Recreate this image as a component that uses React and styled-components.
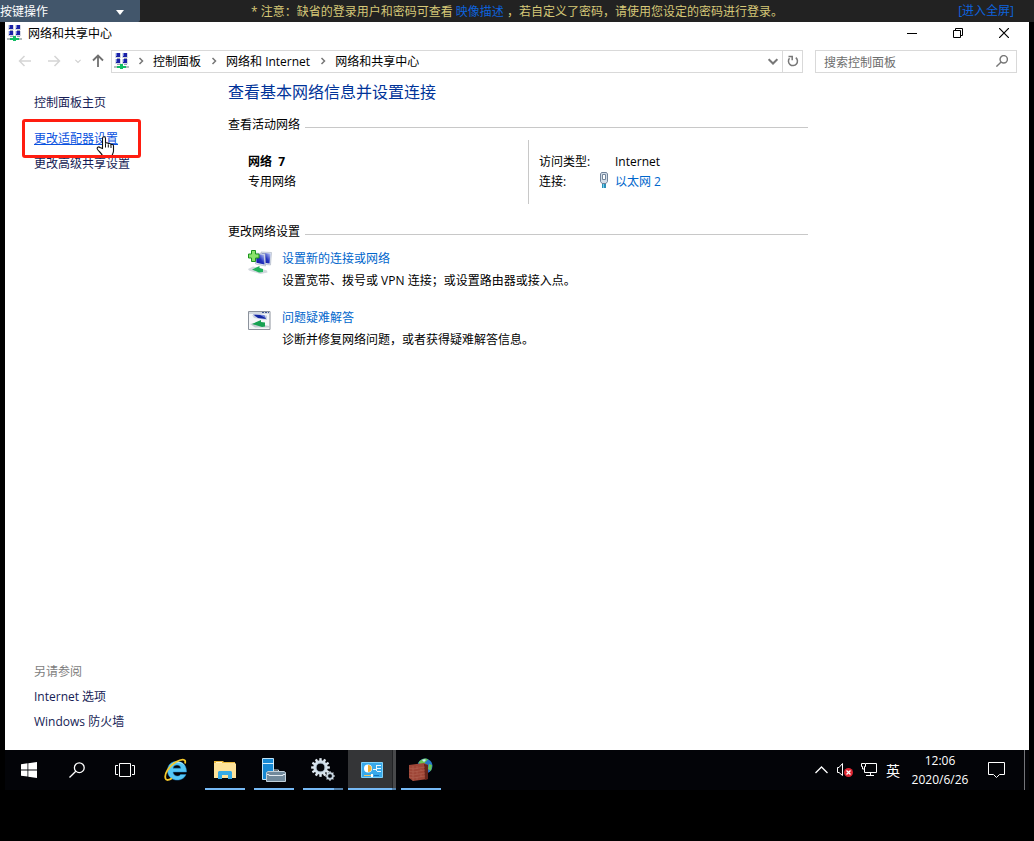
import React from 'react';
import styled, { createGlobalStyle } from 'styled-components';

const GlobalStyle = createGlobalStyle`
  *, *::before, *::after { box-sizing: border-box; }
  body {
    margin: 0;
    background: #000;
    color: #000;
    font: 12px/20px "Open Sans", "Noto Sans CJK SC", sans-serif;
  }
  button, input { font: inherit; color: inherit; }
  p, h1, h2, dl, dd { margin: 0; font-weight: 400; }
  svg { display: block; flex: none; }
`;

const Page = styled.div`
  display: flex;
  flex-direction: column;
  min-height: 100vh;
  padding-bottom: 51px;
`;

const PlainButton = styled.button`
  display: flex;
  align-items: center;
  justify-content: center;
  padding: 0;
  border: 0;
  background: none;
  cursor: pointer;
`;

const ConsoleBar = styled.header`
  display: flex;
  align-items: center;
  height: 22px;
  background: #222;
  white-space: nowrap;
`;

const KeyMenu = styled(PlainButton)`
  justify-content: space-between;
  width: 140px;
  height: 22px;
  padding-top: 2px;
  padding-right: 16px;
  border-radius: 0 0 2px 0;
  background: #42566b;
  color: #fff;
`;

const Notice = styled.p`
  flex: 1;
  padding-top: 2px;
  padding-left: 111px;
  color: #d6c878;
`;

const ConsoleLink = styled.a`
  color: #0e62dc;
  text-decoration: none;
`;

const FullScreen = styled(ConsoleLink)`
  margin-right: 20px;
`;

const Window = styled.div`
  display: flex;
  flex: 1;
  flex-direction: column;
  margin: 0 5px;
  background: #fff;
`;

const TitleBar = styled.div`
  display: flex;
  align-items: center;
  gap: 6px;
  height: 22px;
  padding: 0 2px;
`;

const Title = styled.div`
  flex: 1;
  padding-top: 2px;
`;

const CaptionButtons = styled.div`
  display: flex;
`;

const CaptionButton = styled(PlainButton)`
  width: 46px;
  height: 22px;
`;

const NavRow = styled.nav`
  display: flex;
  align-items: center;
  height: 34px;
  padding: 0 12px 0 6px;
`;

const NavButton = styled(PlainButton)`
  width: ${(p) => p.$width}px;
  height: 22px;
`;

const AddressBar = styled.div`
  display: flex;
  flex: 1;
  align-items: center;
  height: 23px;
  padding-left: 2px;
  border: 1px solid #d9d9d9;
`;

const Crumb = styled.a`
  padding-top: 1px;
  padding-right: 1px;
  color: #000;
  text-decoration: none;
  white-space: nowrap;
`;

const CrumbArrow = styled.span`
  display: flex;
  justify-content: center;
  width: 24px;
`;

const Spacer = styled.div`
  flex: 1;
`;

const RefreshButton = styled(NavButton)`
  border-left: 1px solid #d9d9d9;
`;

const SearchBox = styled.label`
  display: flex;
  align-items: center;
  width: 202px;
  height: 23px;
  margin-left: 12px;
  padding: 0 8px;
  border: 1px solid #d9d9d9;
`;

const SearchInput = styled.input`
  flex: 1;
  min-width: 0;
  height: 21px;
  padding: 2px 0 0;
  border: 0;
  outline: 0;
  background: none;
  &::placeholder { color: #6d6d6d; opacity: 1; }
`;

const Body = styled.div`
  display: flex;
  flex: 1;
`;

const Sidebar = styled.aside`
  display: flex;
  flex-direction: column;
  justify-content: space-between;
  width: 223px;
  padding: 15px 0 18px 29px;
`;

const SideLinks = styled.div`
  display: flex;
  flex-direction: column;
  align-items: flex-start;
  gap: 5px;
`;

const SideLink = styled.a`
  color: #151c55;
  text-decoration: none;
`;

const HomeLink = styled(SideLink)`
  margin-bottom: 11px;
`;

const ActiveItem = styled.div`
  position: relative;
`;

const ActiveLink = styled(SideLink)`
  color: #0a52e0;
  text-decoration: underline;
`;

const Highlight = styled.div`
  position: absolute;
  inset: -10px -23px -9px -12px;
  border: 3px solid #ff1d10;
  border-radius: 3px;
  pointer-events: none;
`;

const Pointer = styled.svg`
  position: absolute;
  top: 6px;
  left: 58px;
`;

const SeeAlso = styled.p`
  color: #7d7d7d;
`;

const Main = styled.main`
  flex: 0 1 580px;
`;

const Heading = styled.h1`
  color: #003399;
  font-size: 16px;
  line-height: 28px;
`;

const SectionTitle = styled.h2`
  display: flex;
  align-items: center;
  gap: 5px;
  margin-top: ${(p) => p.$top}px;
  font-size: 12px;
  &::after {
    content: "";
    flex: 1;
    height: 1px;
    margin-top: 4px;
    background: #c8c8c8;
  }
`;

const Network = styled.div`
  display: flex;
  margin-top: 5px;
  padding-left: 20px;
`;

const NetworkName = styled.div`
  width: 280px;
  padding-top: 12px;
`;

const Strong = styled.p`
  font-weight: 700;
  white-space: pre;
`;

const Details = styled.dl`
  display: grid;
  grid-template-columns: 58px 18px auto;
  align-content: start;
  height: 64px;
  padding: 12px 0 0 10px;
  border-left: 1px solid #c8c8c8;
`;

const DetailValue = styled.dd`
  grid-column: 3;
`;

const DetailIcon = styled.dd`
  padding-left: 3px;
`;

const TaskLink = styled.a`
  color: #0066cc;
  text-decoration: none;
`;

const Task = styled.section`
  display: flex;
  gap: 10px;
  margin-top: ${(p) => p.$top}px;
  padding-left: 20px;
`;

const TaskIcon = styled.div`
  display: flex;
  align-items: center;
  height: 26px;
`;

const TaskText = styled.div`
  display: flex;
  flex-direction: column;
  align-items: flex-start;
  gap: 2px;
`;

const Taskbar = styled.footer`
  display: flex;
  height: 40px;
  margin: 0 5px;
  background: #030408;
  color: #fff;
`;

const SystemButtons = styled.div`
  display: flex;
  margin-right: 3px;
`;

const Apps = styled.div`
  display: flex;
  flex: 1;
  gap: 1px;
`;

const TaskButton = styled(PlainButton)`
  position: relative;
  width: 48px;
  height: 40px;
  background: ${(p) => (p.$active ? 'linear-gradient(90deg, #343537 44px, #222325 44px, #222325 45px, #48494b 45px)' : 'none')};
  &::after {
    content: "";
    position: absolute;
    right: ${(p) => (p.$active ? 0 : 4)}px;
    bottom: 0;
    left: ${(p) => (p.$active ? 0 : 4)}px;
    height: 2px;
    background: ${(p) => {
      if (!p.$open) return 'none';
      const split = p.$active ? 44 : 31;
      return p.$stacked ? `linear-gradient(90deg, #76b9f5 ${split}px, #537fa8 ${split}px)` : '#76b9f5';
    }};
  }
`;

const Tray = styled.div`
  display: flex;
  align-items: center;
`;

const TrayButton = styled(PlainButton)`
  width: 24px;
  height: 40px;
`;

const InputMethod = styled(TrayButton)`
  padding-top: 2px;
  font-size: 14px;
`;

const Clock = styled(PlainButton)`
  flex-direction: column;
  width: 70px;
  line-height: 19px;
`;

const Notifications = styled(TrayButton)`
  width: 50px;
  margin-right: 4px;
  padding-right: 7px;
  border-right: 1px solid #74757a;
`;

const NetworkIcon = () => (
  <svg width="15" height="16" viewBox="0 0 15 16" aria-hidden="true">
    {[[1, 0], [8, 0], [1, 6], [8, 6]].map(([x, y]) => (
      <g key={`${x}-${y}`} transform={`translate(${x} ${y})`}>
        <path fill="#d5d9e3" d="M0 0h6v5H0z" />
        <path fill="#1a20a6" d="M1 0h4v4H1z" />
        <path fill="#7285e0" d="M1 0h1v3H1z" />
        <path fill="#98a1b4" d="M2 5h3v1H2z" />
      </g>
    ))}
    <path fill="#b3bcbe" d="M0 13h15v2H0z" />
    <path fill="#11bd63" d="M6 11h3v2h3v2H9v1H6v-1H3v-2h3z" />
  </svg>
);

const Chevron = ({ color = '#777', d, size = 8, width = 1.5 }) => (
  <svg width={size} height={size} viewBox="0 0 8 8" fill="none" stroke={color} strokeWidth={width} aria-hidden="true">
    <path d={d} />
  </svg>
);
const right = 'M2.5 1 5.5 4 2.5 7';
const down = 'M0.5 2.5 4 6 7.5 2.5';

const Arrow = ({ color, turn = 0, width = 1.5 }) => (
  <svg width="14" height="14" viewBox="0 0 14 14" fill="none" stroke={color} strokeWidth={width} aria-hidden="true">
    <path transform={`rotate(${turn} 7 7)`} d="M13 7H1.5M6.5 2l-5 5 5 5" />
  </svg>
);

const Magnifier = ({ size, color, width }) => (
  <svg width={size} height={size} viewBox="0 0 16 16" fill="none" stroke={color} strokeWidth={width} aria-hidden="true">
    <circle cx="10.3" cy="5.7" r="4.9" />
    <path d="M6.8 9.2.5 15.5" />
  </svg>
);

const Hand = () => (
  <Pointer width="24" height="24" viewBox="0 0 24 24" aria-hidden="true">
    <path
      fill="#fff"
      stroke="#111"
      strokeWidth="1.1"
      d="M10.5 13.500V3.500c0-2.300 3-2.300 3 0V8.500c.3-1.200 2.700-1 2.800.5.4-1 2.600-.8 2.700.8.6-.8 2.500-.3 2.500 1.200V16c0 2-1.200 3-1.500 5h-9.500C10 18.500 7.500 17 5.500 14.500c-1.200-2 1-3.500 2.500-2z"
    />
    <path fill="none" stroke="#111" d="M13.5 8.500v4M16.300 9.500v3M19 10.500v2.500" />
  </Pointer>
);

const EthernetIcon = () => (
  <svg width="8" height="16" viewBox="0 0 8 16" aria-hidden="true">
    <path fill="#d3dde8" stroke="#71839a" d="M1.5.5h5l1 1.500v7.500L6 11.500H2L.5 9.500V2z" />
    <path fill="#fff" stroke="#73869b" d="M2.500 2.500h3v5h-3z" />
    <path fill="#2b8fb9" d="M2 12h4v4H2z" />
    <path fill="#77cde9" d="M3 12h1v4H3z" />
  </svg>
);

const NewConnectionIcon = () => (
  <svg width="24" height="24" viewBox="0 0 24 24" aria-hidden="true">
    <defs>
      <linearGradient id="screen" x1="0" y1="1" x2="1" y2="0">
        <stop offset="0" stopColor="#0c129e" />
        <stop offset=".5" stopColor="#2433bd" />
        <stop offset="1" stopColor="#c5d3fb" />
      </linearGradient>
    </defs>
    <path fill="#dfe4ee" stroke="#a5aebf" strokeWidth=".6" d="m13 2 10.500.500-1 12.500-9-1z" />
    <path fill="url(#screen)" d="m14 3 8.500.500-1 10-7-1z" />
    <path fill="#dfe4ee" stroke="#a5aebf" strokeWidth=".6" d="m7 3 10 .800.500 12.200-10-2z" />
    <path fill="url(#screen)" d="m8 4 8 .800.500 9.700-8-1.800z" />
    <path fill="#d3d8de" d="m0 19 5-2.500 14 4 .5 2-7 1.500L1 20.500z" />
    <path fill="#1eb35a" d="m4 19.500 7.500-3.500v2l3.500 1v3l-4 .500z" />
    <path fill="#8be36a" stroke="#1c9420" d="M3.500.500h4v3.500h3.500v4H7.500v3.500h-4V8H.5V4h3z" />
  </svg>
);

const TroubleshootIcon = () => (
  <svg width="24" height="20" viewBox="0 0 24 20" aria-hidden="true">
    <path fill="#f4f6f8" stroke="#8c929c" d="M.5.500h21.500v18H.5z" />
    <path fill="#d3d9e0" d="M1 1h20.500v2H1z" />
    <path fill="#3c5494" d="M14 1h2v1h-2zM17 1h2v1h-2zM20 1h1v1h-1z" />
    <path fill="#c7d0e0" d="m4 4 15 .500V9L6 7z" />
    <path fill="#1426a3" d="m5 3.500 11 .500 2 4-8-1z" />
    <path fill="#7389de" d="m12 4 4 0 1.500 3z" />
    <path fill="#c4ccd3" d="m2 13 4-1 15 3v1.500H7z" />
    <path fill="#15a152" d="m4 13 9-4v2l4 .500v4l-3 .500z" />
  </svg>
);

const WindowsLogo = () => (
  <svg width="16" height="16" viewBox="0 0 16 16" fill="#fff" aria-hidden="true">
    <path d="m0 2.200 6.500-.9v6.200H0zM7.300 1.200 16 0v7.500H7.300zM0 8.400h6.500v6.200L0 13.700zM7.300 8.400H16V16l-8.700-1.200z" />
  </svg>
);

const TaskViewIcon = () => (
  <svg width="20" height="14" viewBox="0 0 20 14" fill="none" stroke="#fff" aria-hidden="true">
    <path d="M4.5.500h11v13h-11zM3 2.500H.5v9H3M17 2.500h2.500v9H17" />
  </svg>
);

const ExplorerBrowserIcon = () => (
  <svg width="24" height="24" viewBox="0 0 24 24" fill="none" aria-hidden="true">
    <path
      fill="#55c7f5"
      stroke="#2087cc"
      strokeWidth=".5"
      d="M22.5 14H9c.3 4.800 6 5 7.500 2.500h5.500c-3.500 8.800-18.500 7-18.500-4 0-12.500 19.500-12.500 19 1.500zM9 10.200h7.800c-.4-4.200-7.100-4.200-7.800 0z"
    />
    <path fill="#b5eaff" d="M7 7c3-4.500 11-4.500 14 1-4-4-10-4-14-1z" />
    <path stroke="#f4c72b" strokeWidth="1.800" d="M21 5.500c1.500-5.500-4-4.500-9-1.500C5 8 0 16 1.500 20.500c.8 2.500 4 1.500 6.500-.2" />
  </svg>
);

const FolderIcon = () => (
  <svg width="22" height="18" viewBox="0 0 22 18" aria-hidden="true">
    <path fill="#e9b83c" d="M0 0h9l1 1h11v3H0z" />
    <path fill="#fde299" d="M0 2h21l1 1v14H0z" />
    <path fill="#fff3c9" d="M2 1h6v1H2z" />
    <path fill="#35aae6" d="M4 18v-7l1-1h12l1 1v7h-4v-4H8v4z" />
  </svg>
);

const ServerIcon = () => (
  <svg width="24" height="24" viewBox="0 0 24 24" aria-hidden="true">
    <path fill="#1688d2" stroke="#bfe3f7" d="M.5.500h11v21H.5z" />
    <path fill="#d7effc" d="M1 5h11v1H1z" />
    <path fill="none" stroke="#d5dfe6" d="M11.5 14v-2h5v2" />
    <path fill="#71899b" stroke="#c1d0da" d="M4.5 14.500 6 13.500h16l1.500 1v9h-19z" />
    <path fill="none" stroke="#e2eaf0" d="M5 16.500h2v1h14v-1h2" />
  </svg>
);

const Gear = ({ cx, cy, r, teeth }) => (
  <g transform={`translate(${cx} ${cy})`}>
    {Array.from({ length: teeth }, (_, i) => (
      <rect key={i} x={-r * 0.16} y={-r * 1.28} width={r * 0.32} height={r * 0.5} fill="#e1eaf1" transform={`rotate(${(i * 360) / teeth})`} />
    ))}
    <circle r={r * 0.77} fill="none" stroke="#d3e0ea" strokeWidth={r * 0.44} />
    <circle r={r * 0.6} fill="none" stroke="#8397a8" strokeWidth=".5" />
  </g>
);

const GearsIcon = () => (
  <svg width="24" height="24" viewBox="0 0 24 24" aria-hidden="true">
    <Gear cx={9.5} cy={9.5} r={7.3} teeth={12} />
    <Gear cx={19} cy={18} r={3.8} teeth={8} />
  </svg>
);

const ControlPanelIcon = () => (
  <svg width="22" height="16" viewBox="0 0 22 16" aria-hidden="true">
    <path fill="#38a9ea" stroke="#7ed0f8" d="M.5.500h21v15H.5z" />
    <circle cx="7" cy="6.500" r="4" fill="#fff" />
    <path fill="#f6b02c" d="M7 6.500v-3.500a3.500 3.500 0 0 1 3.500 3.500A3.500 3.500 0 0 1 7 10z" />
    <path fill="none" stroke="#e5f7ff" d="M12 7.500h3M15.500 3v6M16 3.500h4M16 6.500h4M16 9.500h4" />
    <path stroke="#eec766" d="M3 13.500h9" />
    <path stroke="#1672b8" d="M13 13.500h5" />
    <path fill="#fff" d="M10 12h2v3h-2z" />
  </svg>
);

const FirewallIcon = () => (
  <svg width="24" height="24" viewBox="0 0 24 24" aria-hidden="true">
    <circle cx="16" cy="8" r="7.5" fill="#2777ca" />
    <path fill="#68c653" d="M9.500 4.500c3-4 8-5 9.500-3l-3 3-1 3-4-1zM20 6l3 1-1 6-3-2z" />
    <path fill="#cceeff" d="M13 2c2-1 3-1 4 0l-2 2z" />
    <path fill="#9e4637" d="m0 7 15-2 4 2v14L4 23l-4-3z" />
    <path fill="#66251d" d="m15 6 4 1v14l-3 1z" />
    <path fill="none" stroke="#b56a59" strokeWidth=".5" d="m0 10 4 1 12-2M0 13l4 1 12-2M0 16l4 1 12-2M0 19l4 1 12-2M4 8v15M8 8v3M12 11v2M8 13v3M12 16v3M8 19v3" />
  </svg>
);

const VolumeIcon = () => (
  <svg width="16" height="14" viewBox="0 0 16 14" fill="none" aria-hidden="true">
    <path stroke="#fff" d="M.5 4.500H2l3.500-4v12L2 9.500H.5z" />
    <circle cx="11.5" cy="9.500" r="4.5" fill="#de2733" />
    <path stroke="#fff" strokeWidth="1.300" d="m9.500 7.500 4 4m0-4-4 4" />
  </svg>
);

const WiredIcon = () => (
  <svg width="17" height="14" viewBox="0 0 17 14" fill="none" stroke="#fff" aria-hidden="true">
    <path d="M5 .500h10.500v9H3.500V6M9.500 10v3M5 12.500h8M.5.500h4v3h-1V6h-2V3.500h-1z" />
  </svg>
);

export default function App() {
  return (
    <>
      <GlobalStyle />
      <Page>
        <ConsoleBar>
          <KeyMenu type="button">
            按键操作
            <svg width="8" height="5" viewBox="0 0 8 5" fill="#fff" aria-hidden="true"><path d="M0 0h8L4 5z" /></svg>
          </KeyMenu>
          <Notice>
            * 注意：缺省的登录用户和密码可查看 <ConsoleLink href="#image">映像描述</ConsoleLink> ，若自定义了密码，请使用您设定的密码进行登录。
          </Notice>
          <FullScreen href="#fullscreen">[进入全屏]</FullScreen>
        </ConsoleBar>

        <Window>
          <TitleBar>
            <NetworkIcon />
            <Title>网络和共享中心</Title>
            <CaptionButtons>
              <CaptionButton type="button" aria-label="最小化">
                <svg width="10" height="10" stroke="#000" aria-hidden="true"><path d="M0 5.500h10" /></svg>
              </CaptionButton>
              <CaptionButton type="button" aria-label="还原">
                <svg width="10" height="10" fill="none" stroke="#000" aria-hidden="true"><path d="M.5 2.500h7v7h-7zM2.500 2V.5h7v7H8" /></svg>
              </CaptionButton>
              <CaptionButton type="button" aria-label="关闭">
                <svg width="10" height="10" stroke="#000" strokeWidth="1.200" aria-hidden="true"><path d="m0 0 10 10M10 0 0 10" /></svg>
              </CaptionButton>
            </CaptionButtons>
          </TitleBar>

          <NavRow>
            <NavButton type="button" $width={27} aria-label="后退"><Arrow color="#d5d5d5" /></NavButton>
            <NavButton type="button" $width={32} aria-label="前进"><Arrow color="#d5d5d5" turn={180} /></NavButton>
            <NavButton type="button" $width={15} aria-label="最近位置"><Chevron color="#d0d0d0" d={down} size={6} /></NavButton>
            <NavButton type="button" $width={26} aria-label="向上"><Arrow color="#707070" turn={90} width={1.8} /></NavButton>
            <AddressBar>
              <NetworkIcon />
              <CrumbArrow><Chevron d={right} /></CrumbArrow>
              <Crumb href="#panel">控制面板</Crumb>
              <CrumbArrow><Chevron d={right} /></CrumbArrow>
              <Crumb href="#internet">网络和 Internet</Crumb>
              <CrumbArrow><Chevron d={right} /></CrumbArrow>
              <Crumb href="#center">网络和共享中心</Crumb>
              <Spacer />
              <NavButton type="button" $width={19} aria-label="展开"><Chevron d={down} size={10} width={1.6} /></NavButton>
              <RefreshButton type="button" $width={20} aria-label="刷新">
                <svg width="12" height="12" viewBox="0 0 12 12" fill="none" stroke="#777" strokeWidth="1.500" aria-hidden="true">
                  <path d="M8.800 2.600a4.500 4.500 0 1 1-6.300.6M1.500 1.500h3.700v3.700" />
                </svg>
              </RefreshButton>
            </AddressBar>
            <SearchBox>
              <SearchInput type="text" placeholder="搜索控制面板" aria-label="搜索控制面板" />
              <Magnifier size={12} color="#777" width={1.9} />
            </SearchBox>
          </NavRow>

          <Body>
            <Sidebar>
              <SideLinks>
                <HomeLink href="#home">控制面板主页</HomeLink>
                <ActiveItem>
                  <ActiveLink href="#adapter">更改适配器设置</ActiveLink>
                  <Hand />
                  <Highlight />
                </ActiveItem>
                <SideLink href="#sharing">更改高级共享设置</SideLink>
              </SideLinks>
              <SideLinks>
                <SeeAlso>另请参阅</SeeAlso>
                <SideLink href="#options">Internet 选项</SideLink>
                <SideLink href="#firewall">Windows 防火墙</SideLink>
              </SideLinks>
            </Sidebar>

            <Main>
              <Heading>查看基本网络信息并设置连接</Heading>
              <SectionTitle $top={9}>查看活动网络</SectionTitle>
              <Network>
                <NetworkName>
                  <Strong>{'网络  7'}</Strong>
                  <p>专用网络</p>
                </NetworkName>
                <Details>
                  <dt>访问类型:</dt>
                  <DetailValue>Internet</DetailValue>
                  <dt>连接:</dt>
                  <DetailIcon><EthernetIcon /></DetailIcon>
                  <DetailValue><TaskLink href="#ethernet">以太网 2</TaskLink></DetailValue>
                </Details>
              </Network>
              <SectionTitle $top={18}>更改网络设置</SectionTitle>
              <Task $top={7}>
                <TaskIcon><NewConnectionIcon /></TaskIcon>
                <TaskText>
                  <TaskLink href="#new">设置新的连接或网络</TaskLink>
                  <p>设置宽带、拨号或 VPN 连接；或设置路由器或接入点。</p>
                </TaskText>
              </Task>
              <Task $top={17}>
                <TaskIcon><TroubleshootIcon /></TaskIcon>
                <TaskText>
                  <TaskLink href="#troubleshoot">问题疑难解答</TaskLink>
                  <p>诊断并修复网络问题，或者获得疑难解答信息。</p>
                </TaskText>
              </Task>
            </Main>
          </Body>
        </Window>

        <Taskbar>
          <SystemButtons>
            <TaskButton type="button" aria-label="开始"><WindowsLogo /></TaskButton>
            <TaskButton type="button" aria-label="搜索"><Magnifier size={16} color="#fff" width={1.3} /></TaskButton>
            <TaskButton type="button" aria-label="任务视图"><TaskViewIcon /></TaskButton>
          </SystemButtons>
          <Apps>
            <TaskButton type="button" aria-label="Internet Explorer"><ExplorerBrowserIcon /></TaskButton>
            <TaskButton type="button" $open aria-label="文件资源管理器"><FolderIcon /></TaskButton>
            <TaskButton type="button" $open aria-label="服务器管理器"><ServerIcon /></TaskButton>
            <TaskButton type="button" $open $stacked aria-label="服务"><GearsIcon /></TaskButton>
            <TaskButton type="button" $open $stacked $active aria-label="控制面板"><ControlPanelIcon /></TaskButton>
            <TaskButton type="button" $open aria-label="防火墙"><FirewallIcon /></TaskButton>
          </Apps>
          <Tray>
            <TrayButton type="button" aria-label="显示隐藏的图标">
              <svg width="13" height="8" fill="none" stroke="#fff" strokeWidth="1.300" aria-hidden="true"><path d="m.5 7 6-6 6 6" /></svg>
            </TrayButton>
            <TrayButton type="button" aria-label="音量"><VolumeIcon /></TrayButton>
            <TrayButton type="button" aria-label="网络"><WiredIcon /></TrayButton>
            <InputMethod type="button">英</InputMethod>
            <Clock type="button"><span>12:06</span><span>2020/6/26</span></Clock>
            <Notifications type="button" aria-label="通知">
              <svg width="17" height="17" fill="none" stroke="#fff" aria-hidden="true"><path d="M.5.500h16v12h-5l-3 3-3-3h-5z" /></svg>
            </Notifications>
          </Tray>
        </Taskbar>
      </Page>
    </>
  );
}
